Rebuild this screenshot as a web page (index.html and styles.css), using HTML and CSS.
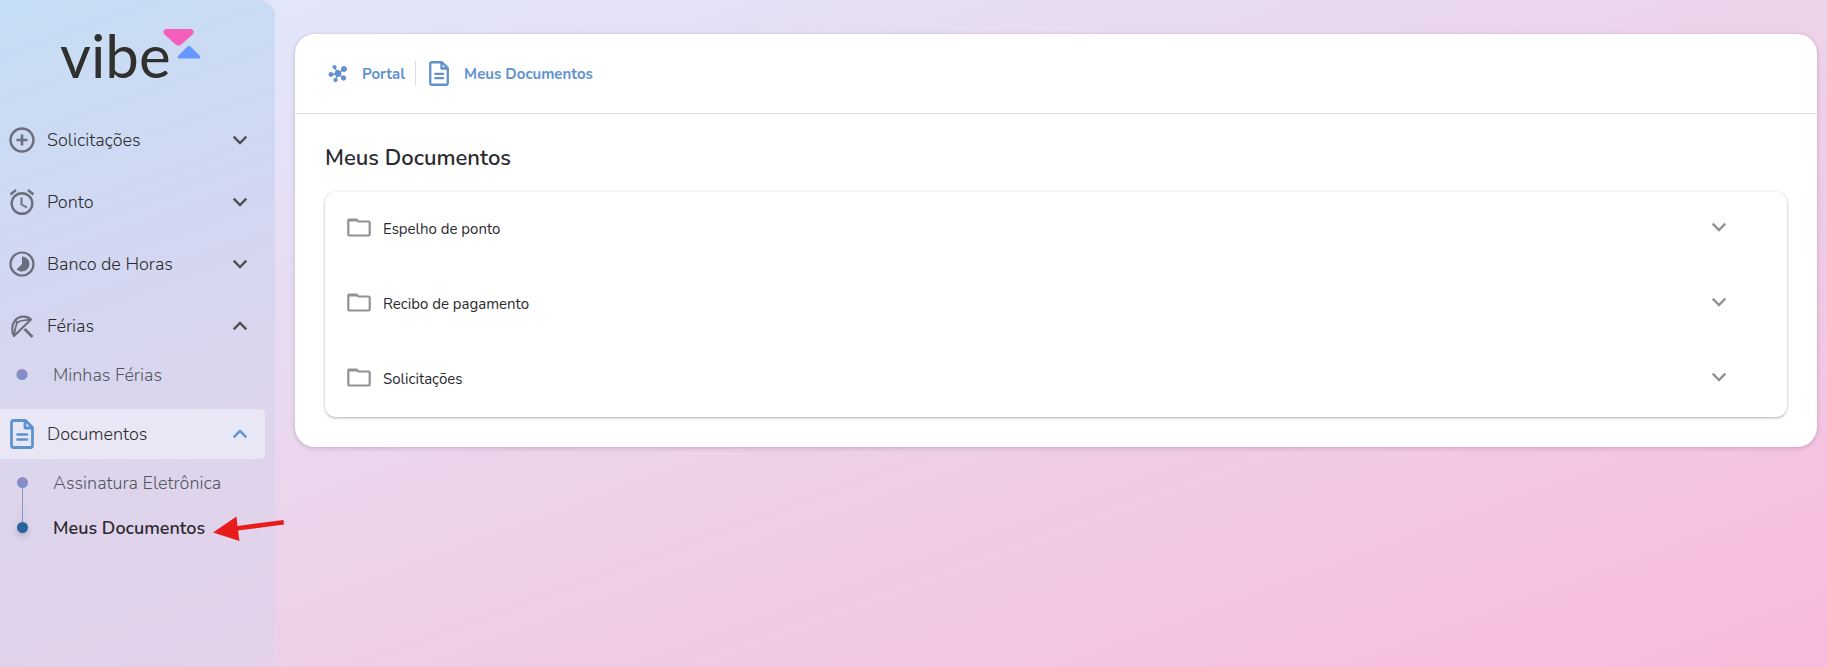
FILE: index.html
```html
<!DOCTYPE html>
<html lang="pt-BR">
<head>
<meta charset="utf-8">
<meta name="viewport" content="width=device-width, initial-scale=1">
<title>Meus Documentos</title>
<link rel="stylesheet" href="styles.css">
</head>
<body>
<svg class="sprite" width="0" height="0" aria-hidden="true">
  <defs>
    <linearGradient id="dot-fill" x1="0" y1="0" x2="0" y2="1"><stop offset="0" stop-color="#9a86c0"/><stop offset="1" stop-color="#7292cc"/></linearGradient>
    <symbol id="chevron" viewBox="0 0 16 10"><path d="M1.700 1.700 8 8 14.300 1.700" fill="none" stroke="currentColor" stroke-width="2.400"/></symbol>
    <symbol id="document" viewBox="0 0 24 30"><path d="M3.500 1.500H15.500L22.500 8.500V26.500Q22.500 28.500 20.500 28.500H3.500Q1.500 28.500 1.500 26.500V3.500Q1.500 1.500 3.500 1.500Z M15 1.500V9H22.500" fill="none" stroke="currentColor" stroke-width="2.800" stroke-linejoin="round"/><path d="M7.500 15.500H17M7.500 20.500H17" fill="none" stroke="currentColor" stroke-width="2.700" stroke-linecap="round"/></symbol>
    <symbol id="folder" viewBox="0 0 24 19"><path d="M2 1.500H9.500L11.500 3.500H21.500Q22.700 3.500 22.700 4.700V16.300Q22.700 17.500 21.500 17.500H2.500Q1.300 17.500 1.300 16.300V2.500Q1.300 1.500 2 1.500Z" fill="none" stroke="currentColor" stroke-width="2.200"/><path d="M1.500 1.500H9.500L11.500 3.500H1.500Z" fill="currentColor"/></symbol>
  </defs>
</svg>
<div class="app">
  <aside class="sidebar">
    <a class="logo" href="#">
      <span class="logo-name">vibe</span>
      <svg class="logo-mark" viewBox="0 0 38 30" aria-hidden="true"><path d="M3 0H28Q32 1 30 5L19 15Q15.500 18 12 15L1 5Q-1 1 3 0Z" fill="#f45fbb"/><path d="M24.500 17.500Q26 16 27.500 17.500L36.500 26.500Q38.500 29.500 36 29.500H16Q13.500 29.500 15.500 26.500Z" fill="#6798ff"/></svg>
    </a>
    <nav class="menu" aria-label="Menu principal">
      <button class="item" type="button" aria-expanded="false">
        <svg class="item-icon" viewBox="0 0 26 30" aria-hidden="true"><circle cx="13" cy="15" r="11.500" fill="none" stroke="currentColor" stroke-width="2.400"/><path d="M13 9.500V20.500M7.500 15H18.500" stroke="currentColor" stroke-width="2.600"/></svg>
        <span class="item-label">Solicitações</span>
        <svg class="chevron" aria-hidden="true"><use href="#chevron"/></svg>
      </button>
      <button class="item" type="button" aria-expanded="false">
        <svg class="item-icon" viewBox="0 0 26 30" aria-hidden="true"><g fill="none" stroke="currentColor" stroke-width="2.400"><circle cx="13" cy="16.500" r="10.300"/><path d="M1.500 7.500 7 3M24.500 7.500 19 3"/><path d="M12.500 10.500V17.500L18 20.500" stroke-width="1.900"/></g></svg>
        <span class="item-label">Ponto</span>
        <svg class="chevron" aria-hidden="true"><use href="#chevron"/></svg>
      </button>
      <button class="item" type="button" aria-expanded="false">
        <svg class="item-icon" viewBox="0 0 26 30" aria-hidden="true"><circle cx="13" cy="15" r="11.500" fill="none" stroke="currentColor" stroke-width="2.200"/><path d="M13 7.500A7.500 7.500 0 1 1 7.700 20.300L13 15Z" fill="currentColor"/></svg>
        <span class="item-label">Banco de Horas</span>
        <svg class="chevron" aria-hidden="true"><use href="#chevron"/></svg>
      </button>
      <div class="group">
        <button class="item" type="button" aria-expanded="true">
          <svg class="item-icon" viewBox="0 0 26 30" aria-hidden="true"><g fill="none" stroke="currentColor" stroke-width="2.200" stroke-linejoin="round"><path d="M5 25C2.500 21 2.500 14 6 9.500C10 4.500 18 4.500 22 8.500Z"/><path d="M5 25C6 19 6.500 14 8.500 11.500C11 9 17 9.500 22 8.500" stroke-width="1.900"/><path d="M6 9.500 9 12" stroke-width="1.900"/><path d="M15.500 18 23.500 26" stroke-width="2.600"/></g></svg>
          <span class="item-label">Férias</span>
          <svg class="chevron chevron-up" aria-hidden="true"><use href="#chevron"/></svg>
        </button>
        <a class="subitem" href="#"><svg class="marker" viewBox="0 0 12 45" aria-hidden="true"><circle cx="6" cy="22.500" r="5.500" fill="url(#dot-fill)"/></svg>Minhas Férias</a>
      </div>
      <div class="group">
        <button class="item item-active" type="button" aria-expanded="true">
          <svg class="item-icon" aria-hidden="true"><use href="#document"/></svg>
          <span class="item-label">Documentos</span>
          <svg class="chevron chevron-up" aria-hidden="true"><use href="#chevron"/></svg>
        </button>
        <a class="subitem" href="#"><svg class="marker" viewBox="0 0 12 45" aria-hidden="true"><path d="M6.500 22V45" stroke="#8e92cb"/><circle cx="6.500" cy="22.500" r="5.500" fill="url(#dot-fill)"/></svg>Assinatura Eletrônica</a>
        <a class="subitem subitem-current" href="#" aria-current="page"><svg class="marker marker-current" viewBox="0 0 12 45" aria-hidden="true"><path d="M6.500 0V22" stroke="#8e92cb"/><circle cx="6.500" cy="22.500" r="5.500" fill="#28639e"/></svg>Meus Documentos
          <svg class="pointer" viewBox="0 0 72 26" aria-hidden="true"><path d="M0 16.500 23.500 .5 24.500 10 70.500 4 71 8.500 25 14.500 26.500 25Z" fill="#e91c1c"/></svg>
        </a>
      </div>
    </nav>
  </aside>
  <main class="card">
    <nav class="breadcrumb" aria-label="Trilha">
      <a class="crumb" href="#"><svg class="crumb-hub" viewBox="0 0 20 20" aria-hidden="true"><g fill="currentColor" stroke="currentColor"><circle cx="10" cy="9.500" r="3"/><circle cx="16" cy="5" r="2.500"/><circle cx="6.500" cy="3" r="1.600"/><circle cx="3" cy="10.500" r="2"/><circle cx="7.500" cy="16" r="1.700"/><circle cx="15.500" cy="14" r="2.200"/><path d="M10 9.500 16 5M10 9.500 6.500 3M10 9.500 3 10.500M10 9.500 7.500 16M10 9.500 15.500 14" stroke-width="1.400"/></g></svg>Portal</a>
      <a class="crumb" href="#"><svg class="crumb-document" aria-hidden="true"><use href="#document"/></svg>Meus Documentos</a>
    </nav>
    <section class="content">
      <h1 class="title">Meus Documentos</h1>
      <div class="panel">
        <button class="row" type="button" aria-expanded="false"><svg class="folder" aria-hidden="true"><use href="#folder"/></svg><span class="row-label">Espelho de ponto</span><svg class="chevron" aria-hidden="true"><use href="#chevron"/></svg></button>
        <button class="row" type="button" aria-expanded="false"><svg class="folder" aria-hidden="true"><use href="#folder"/></svg><span class="row-label">Recibo de pagamento</span><svg class="chevron" aria-hidden="true"><use href="#chevron"/></svg></button>
        <button class="row" type="button" aria-expanded="false"><svg class="folder" aria-hidden="true"><use href="#folder"/></svg><span class="row-label">Solicitações</span><svg class="chevron" aria-hidden="true"><use href="#chevron"/></svg></button>
      </div>
    </section>
  </main>
</div>
</body>
</html>
```
FILE: styles.css
```css
* { box-sizing: border-box; }
body {
  margin: 0;
  font-family: Nunito, "Open Sans", "Noto Sans", sans-serif;
  color: #2b2b2f;
}
.sprite { position: absolute; }
button { font: inherit; color: inherit; background: none; border: 0; text-align: left; cursor: pointer; }
a { color: inherit; text-decoration: none; }
svg { flex: none; }

.app {
  display: flex;
  align-items: flex-start;
  gap: 20px;
  min-height: 100vh;
  padding-right: 10px;
  background: linear-gradient(to bottom right, #e0eafd, #ecd3ea 50%, #f9bbdb);
}
.sidebar {
  width: 275px;
  flex: none;
  align-self: stretch;
  padding-right: 10px;
  border-radius: 0 16px 0 0;
  background: linear-gradient(160deg, #c5def5, #d3d7f1 40%, #dcd5ec 65%, #e5d1ea);
}
.logo {
  display: flex;
  align-items: flex-start;
  height: 115px;
  padding: 29px 0 0 60px;
}
.logo-name {
  width: 103px;
  font-family: Lato, sans-serif;
  font-size: 60px;
  line-height: 52px;
  color: #30302e;
}
.logo-mark { width: 38px; height: 30px; }

.menu { display: flex; flex-direction: column; gap: 12px; }
.item {
  display: flex;
  align-items: center;
  width: 100%;
  height: 50px;
  padding: 0 17px 0 9px;
  border-radius: 0 5px 5px 0;
  font-size: 18px;
  font-weight: 300;
}
.item-icon { width: 26px; height: 30px; margin-right: 12px; color: #6b6f7d; }
.item-label { flex: 1; }
.chevron { width: 16px; height: 10px; color: #505050; }
.chevron-up { transform: rotate(180deg); }
.item-active { background: #e9e6f5; }
.item-active .item-icon, .item-active .chevron { color: #5e93d1; }
.item + .subitem { margin-top: 1px; }
.subitem {
  display: flex;
  align-items: center;
  height: 45px;
  padding-left: 16px;
  font-size: 18px;
  font-weight: 300;
  color: #53565f;
}
.marker { width: 12px; height: 45px; margin-right: 25px; }
.marker-current { filter: drop-shadow(0 3px 3px rgba(40, 60, 100, .25)); }
.subitem-current { position: relative; font-weight: 600; color: #2b2b2f; }
.pointer { position: absolute; left: 213px; top: 11px; width: 72px; height: 26px; }

.card {
  flex: 1;
  min-width: 0;
  margin-top: 34px;
  border-radius: 20px;
  background: #fff;
  box-shadow: 0 1px 4px rgba(70, 40, 90, .25);
}
.breadcrumb {
  display: flex;
  align-items: center;
  height: 80px;
  padding: 0 31px;
  border-bottom: 1px solid #dedede;
  font-size: 15px;
  font-weight: 700;
  color: #6291d0;
}
.crumb { display: flex; align-items: center; height: 25px; }
.crumb + .crumb { margin-left: 10px; padding-left: 13px; border-left: 1px solid #dedede; }
.crumb-hub { width: 20px; height: 20px; margin: 0 14px 0 2px; }
.crumb-document { width: 20px; height: 25px; margin-right: 15px; }
.content { padding: 29px 30px 30px; }
.title { margin: 0 0 19px; font-size: 22px; line-height: 30px; font-weight: 600; }
.panel {
  border-radius: 11px;
  box-shadow: 0 1px 3px rgba(0, 0, 0, .32);
}
.row {
  display: flex;
  align-items: center;
  width: 100%;
  height: 75px;
  padding: 0 60px 5px 22px;
  font-size: 15px;
  font-weight: 400;
}
.folder { width: 24px; height: 19px; margin-right: 12px; color: #929292; }
.row-label { flex: 1; padding-top: 4px; }
.row .chevron { color: #929292; }
```
